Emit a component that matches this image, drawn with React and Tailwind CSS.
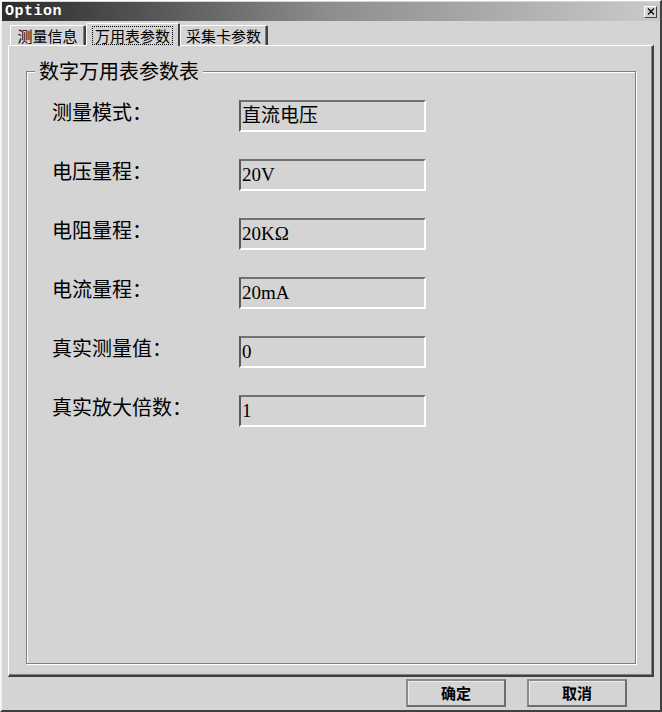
import React from 'react';

const campos = [
  { etiqueta: '测量模式：', valor: '直流电压' },
  { etiqueta: '电压量程：', valor: '20V' },
  { etiqueta: '电阻量程：', valor: '20KΩ' },
  { etiqueta: '电流量程：', valor: '20mA' },
  { etiqueta: '真实测量值：', valor: '0' },
  { etiqueta: '真实放大倍数：', valor: '1' },
];

const pestanas = [
  { texto: '测量信息', ancho: 'w-[76px]', activa: false },
  { texto: '万用表参数', ancho: 'w-[94px]', activa: true },
  { texto: '采集卡参数', ancho: 'w-[88px]', activa: false },
];

function Pestana({ texto, ancho, activa }) {
  if (activa) {
    return (
      <div className={`${ancho} relative z-10 -mb-px h-[23px] flex items-center justify-center bg-[#d4d4d4] border-t border-l border-white border-r-2 border-r-[#404040] rounded-t-[2px]`}>
        <span className="px-[2px] leading-[17px] border border-dotted border-black text-[15px] text-black">
          {texto}
        </span>
      </div>
    );
  }
  return (
    <div className={`${ancho} h-[20px] flex items-center justify-center bg-[#d4d4d4] border-t border-l border-white border-r-2 border-r-[#404040] rounded-t-[2px] shadow-[inset_-1px_0_0_#808080]`}>
      <span className="text-[15px] leading-[18px] text-black">{texto}</span>
    </div>
  );
}

function Boton({ children }) {
  return (
    <button className="w-[100px] h-[28px] flex items-center justify-center bg-[#d4d4d4] border-2 border-[#8a8a8a] border-r-[#6e6e6e] border-b-[#6e6e6e] shadow-[inset_1px_1px_0_#ececec] text-[15px] font-bold text-black">
      {children}
    </button>
  );
}

export default function App() {
  return (
    <div className="w-[662px] h-[712px] flex flex-col bg-[#d4d4d4] border-t border-t-white border-l-2 border-l-[#f4f4f4] border-r-2 border-r-[#404040] border-b-2 border-b-[#404040] pt-px font-['Noto_Sans_CJK_SC',sans-serif] overflow-hidden">
      {/* barra de título */}
      <div className="h-[19px] flex items-center justify-between pl-[3px] pr-[3px] bg-gradient-to-r from-[#2c2c2c] via-[#8e8e8e] to-[#cacaca]">
        <span className="font-['Liberation_Mono',monospace] text-[15px] font-bold leading-[19px] tracking-[0.5px] text-white">Option</span>
        <div className="w-[13px] h-[12px] flex items-center justify-center bg-[#d4d4d4] border border-white border-r-[#404040] border-b-[#404040]">
          <svg width="8" height="7" viewBox="0 0 8 7">
            <path d="M1 0.5 L7 6.5 M7 0.5 L1 6.5" stroke="#000" strokeWidth="1.2" fill="none" />
          </svg>
        </div>
      </div>

      {/* pestañas */}
      <div className="mt-[2px] h-[22px] flex items-end pl-[8px]">
        {pestanas.map((p) => (
          <Pestana key={p.texto} {...p} />
        ))}
      </div>

      {/* página */}
      <div className="mx-[6px] h-[632px] flex flex-col border-t border-l border-white border-r-2 border-b-2 border-r-[#404040] border-b-[#404040] shadow-[inset_-1px_-1px_0_#808080] pl-[17px] pr-[16px]">
        <div className="relative mt-[25px] h-[593px] border border-[#808080] shadow-[inset_1px_1px_0_#fff,1px_1px_0_#fff]">
          <span className="absolute left-[8px] -top-[12px] px-[4px] bg-[#d4d4d4] text-[20px] leading-[22px] text-black">
            数字万用表参数表
          </span>
          <div className="pt-[28px] pl-[25px] flex flex-col gap-[27px]">
            {campos.map((c) => (
              <div key={c.etiqueta} className="h-[32px] flex items-center">
                <div className="w-[187px] pb-[9px] text-[20px] leading-[24px] text-black">{c.etiqueta}</div>
                <div className="w-[187px] h-[32px] flex items-center pl-px border-2 border-t-[#707070] border-l-[#5a5a5a] border-r-white border-b-white font-['Liberation_Serif','Noto_Sans_CJK_SC',serif] text-[19px] leading-[26px] text-black">
                  {c.valor}
                </div>
              </div>
            ))}
          </div>
        </div>
      </div>

      {/* botones */}
      <div className="mt-[2px] flex justify-end gap-[21px] pr-[33px]">
        <Boton>确定</Boton>
        <Boton>取消</Boton>
      </div>
    </div>
  );
}
